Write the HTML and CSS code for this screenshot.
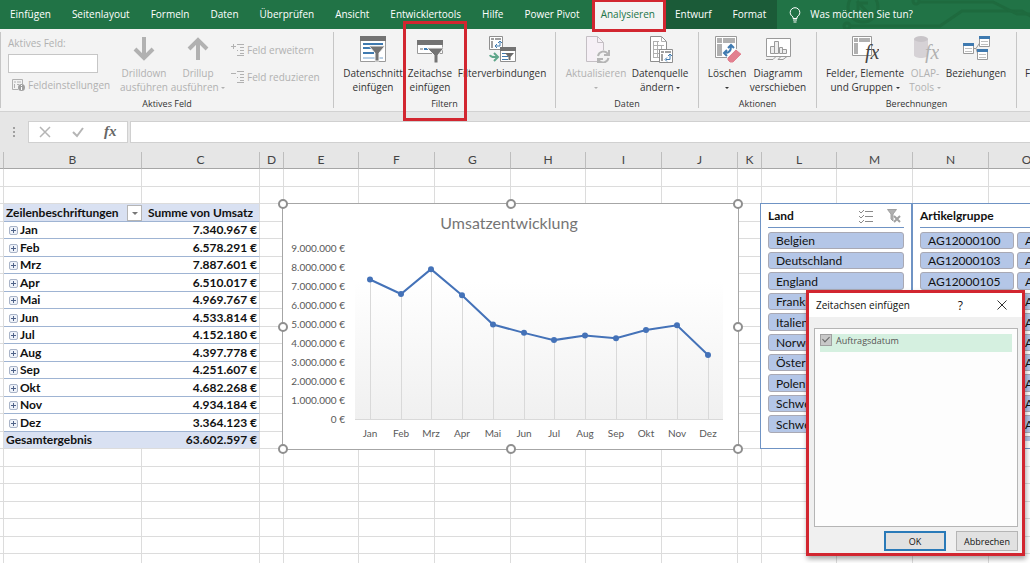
FILE: index.html
```html
<!DOCTYPE html>
<html lang="de">
<head>
    <meta charset="UTF-8">
    <title>Umsatzentwicklung</title>
    <link rel="stylesheet" href="styles.css">
</head>
<body>
    <nav class="tabs">
        <a href="#">Einfügen</a>
        <a href="#">Seitenlayout</a>
        <a href="#">Formeln</a>
        <a href="#">Daten</a>
        <a href="#">Überprüfen</a>
        <a href="#">Ansicht</a>
        <a href="#">Entwicklertools</a>
        <a href="#">Hilfe</a>
        <a href="#">Power Pivot</a>
        <a href="#" class="active">Analysieren<span class="mark mark-tab"></span></a>
        <a href="#" class="context">Entwurf</a>
        <a href="#" class="context">Format</a>
        <a href="#" class="search">
            <svg width="12" height="16" viewBox="0 0 12 16" fill="none" stroke="#fff">
                <path d="M4 11.5V10C2.6 9 1.2 7.600 1.200 5.500a4.700 4.700 0 0 1 9.600 0C10.800 7.600 9.400 9 8 10v1.500zM4 13h4M4.500 15h3"/>
            </svg>
            Was möchten Sie tun?
        </a>
        <svg class="circuit" width="200" height="29" viewBox="0 0 200 29" fill="none" stroke="#1e6a3e" stroke-width="3">
            <circle cx="33" cy="7" r="15"/>
            <path d="M27 1l12 13M28 3h10M28 2v10"/>
            <circle cx="17" cy="26" r="3"/>
            <path d="M20 26h90l22-15h60l10 6"/>
            <circle cx="86" cy="1" r="3"/>
            <path d="M89 2h74l24 12h20"/>
        </svg>
    </nav>

    <div class="ribbon">
        <section class="group">
            <div class="tools tools-field">
                <div class="field">
                    <label for="activeField">Aktives Feld:</label>
                    <input id="activeField" type="text">
                    <button class="small" disabled>
                        <svg width="15" height="14" viewBox="0 0 15 14" fill="none" stroke="#b1b1b1">
                            <path d="M7 11.500H1.500v-10h10V6M3 4h2M6 4h4M3.500 6v4M6 6.500h2"/>
                            <circle cx="10.500" cy="9.500" r="3.500" fill="#a0a0a0" stroke="none"/>
                            <path d="M10.500 7v1M10.500 9v3" stroke="#fff"/>
                        </svg>
                        Feldeinstellungen
                    </button>
                </div>
                <button class="tool" disabled>
                    <svg width="28" height="28" viewBox="0 0 28 28" fill="none" stroke="#b1b1b1" stroke-width="4">
                        <path d="M14 2v21M5 14l9 9 9-9"/>
                    </svg>
                    <span>Drilldown<br>ausführen</span>
                </button>
                <button class="tool" disabled>
                    <svg width="28" height="28" viewBox="0 0 28 28" fill="none" stroke="#b1b1b1" stroke-width="4">
                        <path d="M14 25V5M5 14l9-9 9 9"/>
                    </svg>
                    <span>Drillup<br>ausführen <i class="arrow"></i></span>
                </button>
                <div class="stack">
                    <button class="small" disabled>
                        <svg width="14" height="14" viewBox="0 0 14 14" fill="none" stroke="#b1b1b1">
                            <path d="M0 3.500h5M2.500 1v5M6 1.500h7M9 4.500h4M9 7.500h4M9 10.500h4M6 12.500h7M6 7.500h1"/>
                        </svg>
                        Feld erweitern
                    </button>
                    <button class="small" disabled>
                        <svg width="14" height="14" viewBox="0 0 14 14" fill="none" stroke="#b1b1b1">
                            <path d="M0 3.500h5M6 1.500h7M9 4.500h4M9 7.500h4M9 10.500h4M6 12.500h7M6 7.500h1"/>
                        </svg>
                        Feld reduzieren
                    </button>
                </div>
            </div>
            <h2>Aktives Feld</h2>
        </section>

        <section class="group">
            <div class="tools tools-filter">
                <button class="tool">
                    <svg width="28" height="28" viewBox="0 0 28 28">
                        <path d="M1.500 1.500h25v25h-25z" fill="#fff" stroke="#9a9a9a"/>
                        <path d="M1 1h26v5H1z" fill="#737373"/>
                        <path d="M4 9h20M4 13h12M4 18h11" stroke="#3f7ab0" stroke-width="2"/>
                        <path d="M4 23h20" stroke="#b9cfe4" stroke-width="2"/>
                        <path d="M10 11h16l-6 7v8h-4v-8z" fill="#737373" stroke="#f3f3f3"/>
                    </svg>
                    <span>Datenschnitt<br>einfügen</span>
                </button>
                <button class="tool">
                    <svg width="28" height="28" viewBox="0 0 28 28">
                        <path d="M1.500 5.500h25v13h-25z" fill="#fff" stroke="#9a9a9a"/>
                        <path d="M1 5h26v5H1z" fill="#737373"/>
                        <path d="M4 14h20" stroke="#b5b5b5" stroke-width="2" stroke-dasharray="3 1"/>
                        <path d="M8 14h8" stroke="#3f7ab0" stroke-width="2"/>
                        <path d="M11 13h17l-6 7v8h-4v-8z" fill="#737373" stroke="#f3f3f3"/>
                    </svg>
                    <span>Zeitachse<br>einfügen</span>
                    <span class="mark mark-tool"></span>
                </button>
                <button class="tool">
                    <svg width="28" height="28" viewBox="0 0 28 28" fill="none">
                        <path d="M1.500 1.500h13v13h-13z" fill="#fff" stroke="#8f8f8f"/>
                        <path d="M3 4h3M7 4h6M4 6v7" stroke="#a0a0a0" stroke-width="2"/>
                        <path d="M8 11h4V6M10 8l2-2 2 2M9 9l-2 2 2 2" stroke="#3f7ab0"/>
                        <path d="M12.500 12.500h15v14h-15z" fill="#fff" stroke="#8f8f8f"/>
                        <path d="M12 12h16v4H12z" fill="#737373"/>
                        <path d="M14 18.500h8M14 21.500h6M14 24.500h6" stroke="#3f7ab0"/>
                        <path d="M17 18h9l-3.500 4v3h-2v-3z" fill="#6a6a6a"/>
                        <path d="M2 20c1 3 4 2 7 2M6 18l4 4-4 4" stroke="#5fa68a" stroke-width="2"/>
                    </svg>
                    <span>Filterverbindungen</span>
                </button>
            </div>
            <h2>Filtern</h2>
        </section>

        <section class="group">
            <div class="tools tools-data">
                <button class="tool" disabled>
                    <svg width="28" height="28" viewBox="0 0 28 28" fill="none">
                        <path d="M4.500 1.500h11l6 6v19h-17z" fill="#f6f0f6" stroke="#c4bfc4"/>
                        <path d="M15.500 1.500v6h6" stroke="#c4bfc4"/>
                        <circle cx="21" cy="22" r="7" fill="#f3f3f3"/>
                        <path d="M16 21a5.500 5.500 0 0 1 10-2M26.500 23a5.500 5.500 0 0 1-10 2M27 15v5h-5M16 28v-4h5" stroke="#b5b5b5" stroke-width="2"/>
                    </svg>
                    <span>Aktualisieren<br><i class="arrow"></i></span>
                </button>
                <button class="tool">
                    <svg width="28" height="28" viewBox="0 0 28 28" fill="none" stroke="#8f8f8f">
                        <path d="M4.500 1.500h11l5 5v20h-16z" fill="#fff"/>
                        <path d="M15.500 1.500v5h5M7 6.500h6M7 10.500h11M7 14.500h11M7 18.500h8M7 22.500h8M7.500 6v17M11.500 6v17M15.500 10v6" stroke="#b0b0b0"/>
                        <path d="M13.500 14.500h13v13h-13z" fill="#fff"/>
                        <path d="M15 17h3M19 17h6M16 19v7" stroke="#a0a0a0" stroke-width="2"/>
                        <path d="M20 24.500h4V19M22 21l2-2 2 2M21 22.500l-2 2 2 2" stroke="#3f7ab0"/>
                    </svg>
                    <span>Datenquelle<br>ändern <i class="arrow"></i></span>
                </button>
            </div>
            <h2>Daten</h2>
        </section>

        <section class="group">
            <div class="tools tools-action">
                <button class="tool">
                    <svg width="28" height="28" viewBox="0 0 28 28" fill="none">
                        <path d="M2.500 1.500h21v21h-21z" fill="#fff" stroke="#9a9a9a"/>
                        <path d="M4 3h5v5H4zM10 3h12v5H10zM4 9h5v12H4z" fill="#b0b0b0"/>
                        <path d="M12 18c5 0 6-3 6-7M15 13l3-3 3 3M14 15l-3 3 3 3" stroke="#3f7ab0" stroke-width="2"/>
                        <path d="M14 23l9-9 6 5-9 9h-3l-3-3z" fill="#e2808f" stroke="#f3f3f3"/>
                    </svg>
                    <span>Löschen<br><i class="arrow"></i></span>
                </button>
                <button class="tool">
                    <svg width="28" height="28" viewBox="0 0 28 28" fill="#fff" stroke="#9a9a9a">
                        <path d="M2.500 3.500h24v18h-24z"/>
                        <path d="M6.500 11.500h4v7h-4zM10.500 6.500h4v12h-4zM15.500 12.500h3v6h-3zM18.500 14.500h4v4h-4z" fill="#eee"/>
                        <path d="M2 24.500h7l3-3h5l-3 3h5l4-3" fill="none"/>
                    </svg>
                    <span>Diagramm<br>verschieben</span>
                </button>
            </div>
            <h2>Aktionen</h2>
        </section>

        <section class="group">
            <div class="tools tools-calc">
                <button class="tool">
                    <svg width="28" height="28" viewBox="0 0 28 28">
                        <path d="M1.500 1.500h19v19h-19z" fill="#fff" stroke="#9a9a9a"/>
                        <path d="M3 3h4v4H3zM8 3h11v4H8zM3 8h4v11H3z" fill="#b0b0b0"/>
                        <text class="fx fx-big" x="14" y="24">fx</text>
                    </svg>
                    <span>Felder, Elemente<br>und Gruppen <i class="arrow"></i></span>
                </button>
                <button class="tool" disabled>
                    <svg width="28" height="28" viewBox="0 0 28 28">
                        <path d="M3 4v16c0 4 14 4 14 0V4z" fill="#d6d2d6"/>
                        <ellipse cx="10" cy="4" rx="7" ry="3" fill="#c8c4c8"/>
                        <text class="fx fx-big fx-off" x="14" y="24">fx</text>
                    </svg>
                    <span>OLAP-<br>Tools <i class="arrow"></i></span>
                </button>
                <button class="tool">
                    <svg width="28" height="28" viewBox="0 0 28 28" fill="#fff" stroke="#9a9a9a">
                        <path d="M11 13.500h3l4-6M14 13.500l2 6" fill="none"/>
                        <path d="M1.500 8.500h10v10h-10zM17.500 1.500h10v10h-10zM15.500 14.500h10v10h-10z"/>
                        <path d="M1 9.500h11M17 2.500h11M15 15.500h11" stroke="#3f7ab0" stroke-width="3"/>
                        <path d="M3 13.500h7M3 16.500h7M19 6.500h7M19 9.500h7M17 19.500h7M17 22.500h7" stroke="#c0c0c0"/>
                    </svg>
                    <span>Beziehungen</span>
                </button>
            </div>
            <h2>Berechnungen</h2>
        </section>

        <section class="group group-cut">
            <div class="tools">
                <button class="tool"><span>Feldliste</span></button>
            </div>
        </section>
    </div>

    <div class="formula">
        <svg class="grip" width="4" height="12" viewBox="0 0 4 12" fill="#a0a0a0">
            <path d="M1 1h2v2H1zM1 5h2v2H1zM1 9h2v2H1z"/>
        </svg>
        <div class="formula-buttons">
            <button aria-label="Abbrechen">
                <svg width="12" height="12" viewBox="0 0 12 12" stroke="#b5b5b5" stroke-width="1.500"><path d="M1 1l10 10M11 1L1 11"/></svg>
            </button>
            <button aria-label="Eingeben">
                <svg width="12" height="12" viewBox="0 0 12 12" fill="none" stroke="#b5b5b5" stroke-width="2"><path d="M1 6l4 4 6-8"/></svg>
            </button>
            <button aria-label="Funktion einfügen">
                <svg width="16" height="18" viewBox="0 0 16 18"><text class="fx" x="1" y="13">fx</text></svg>
            </button>
        </div>
        <input type="text" aria-label="Bearbeitungsleiste">
    </div>

    <main class="sheet">
        <table class="cells">
            <colgroup>
                <col class="w-a"><col class="w-b"><col class="w-c"><col class="w-gap">
                <col class="w-odd"><col class="w-std"><col class="w-std"><col class="w-odd"><col class="w-std"><col class="w-std">
                <col class="w-gap"><col class="w-odd"><col class="w-std"><col class="w-std"><col class="w-std"><col>
            </colgroup>
            <thead>
                <tr>
                    <th></th><th>B</th><th>C</th><th>D</th><th>E</th><th>F</th><th>G</th><th>H</th>
                    <th>I</th><th>J</th><th>K</th><th>L</th><th>M</th><th>N</th><th>O</th><th></th>
                </tr>
            </thead>
            <tbody id="cellRows"></tbody>
        </table>

        <figure class="chart">
            <svg id="chart" width="454" height="244" viewBox="0 0 454 244"></svg>
            <i class="handle h-left v-top"></i><i class="handle h-mid v-top"></i><i class="handle h-right v-top"></i>
            <i class="handle h-left v-mid"></i><i class="handle h-right v-mid"></i>
            <i class="handle h-left v-bottom"></i><i class="handle h-mid v-bottom"></i><i class="handle h-right v-bottom"></i>
        </figure>

        <section class="slicer slicer-land">
            <header>
                <h3>Land</h3>
                <button aria-label="Mehrfachauswahl">
                    <svg width="14" height="14" viewBox="0 0 14 14" fill="none" stroke="#8a8a8a">
                        <path d="M0 2l2 2 3-3M0 7l2 2 3-3M0 12l2 2 3-3M6 2.500h8M6 7.500h8M6 12.500h8"/>
                    </svg>
                </button>
                <button aria-label="Filter löschen">
                    <svg width="14" height="14" viewBox="0 0 14 14" fill="#b0b0b0" stroke="#a0a0a0">
                        <path d="M0.500 0.500h9L6 5v7L4 10V5z"/><path d="M7 7l6 6M13 7l-6 6" stroke-width="2"/>
                    </svg>
                </button>
            </header>
            <div class="slicer-list">
                <div class="slicer-col" id="landList"></div>
            </div>
        </section>

        <section class="slicer slicer-group">
            <header><h3>Artikelgruppe</h3></header>
            <div class="slicer-list">
                <div class="slicer-col" id="groupList1"></div>
                <div class="slicer-col" id="groupList2"></div>
            </div>
        </section>

        <div class="dialog" role="dialog" aria-labelledby="dialogTitle">
            <header>
                <h3 id="dialogTitle">Zeitachsen einfügen</h3>
                <button aria-label="Hilfe">?</button>
                <button aria-label="Schließen">
                    <svg width="10" height="10" viewBox="0 0 10 10" stroke="#333"><path d="M0.500 0.500l9 9M9.500 0.500l-9 9"/></svg>
                </button>
            </header>
            <div class="dialog-list">
                <label><input type="checkbox" checked disabled>Auftragsdatum</label>
            </div>
            <footer>
                <button class="primary">OK</button>
                <button>Abbrechen</button>
            </footer>
        </div>
    </main>

    <script>
        const months = [
            ['Jan', 7340967], ['Feb', 6578291], ['Mrz', 7887601], ['Apr', 6510017],
            ['Mai', 4969767], ['Jun', 4533814], ['Jul', 4152180], ['Aug', 4397778],
            ['Sep', 4251607], ['Okt', 4682268], ['Nov', 4934184], ['Dez', 3364123]
        ];
        const grandTotal = 63602597;

        function euro(value) {
            return String(value).replace(/\B(?=(\d{3})+$)/g, '.') + ' €';
        }

        // Tabellenzeilen
        function row(cls, b, c) {
            return `<tr class="${cls}"><td></td><td>${b}</td><td>${c}</td>${'<td></td>'.repeat(13)}</tr>`;
        }

        function loadCells() {
            let html = row('', '', '').repeat(2);
            html += row('pivot-head', '<div>Zeilenbeschriftungen<button aria-label="Filter"><i class="arrow"></i></button></div>', 'Summe von Umsatz');
            months.forEach(([name, value]) => {
                html += row('pivot-row', `<button class="expand" aria-label="Erweitern"></button>${name}`, euro(value));
            });
            html += row('pivot-total', 'Gesamtergebnis', euro(grandTotal));
            html += row('', '', '').repeat(7);
            document.getElementById('cellRows').innerHTML = html;
        }

        // Liniendiagramm
        function loadChart() {
            const left = 72, bottom = 215, perMillion = 19;
            const x = i => Math.round(87 + i * 30.7);
            const y = v => bottom - v / 1000000 * perMillion;
            let html = `
                <defs><linearGradient id="plot" x1="0" y1="0" x2="0" y2="1">
                    <stop offset="0.2" stop-color="#ffffff"/><stop offset="1" stop-color="#f0f0f0"/>
                </linearGradient></defs>
                <rect x="${left}" y="43" width="368" height="172" fill="url(#plot)"/>
                <text class="chart-title" x="226" y="25">Umsatzentwicklung</text>
                <path d="M${left} ${bottom}.5h368" stroke="#d9d9d9"/>`;
            for (let i = 0; i < 10; i++) {
                html += `<text class="chart-y" x="62" y="${bottom + 4 - i * perMillion}">${euro(i * 1000000)}</text>`;
            }
            months.forEach(([name, value], i) => {
                html += `<path d="M${x(i)}.5 ${bottom}V${y(value)}" stroke="#d9d9d9"/>
                         <text class="chart-x" x="${x(i)}" y="233">${name}</text>`;
            });
            html += `<polyline class="chart-line" points="${months.map((m, i) => x(i) + ',' + y(m[1])).join(' ')}"/>`;
            months.forEach((m, i) => {
                html += `<circle class="chart-dot" cx="${x(i)}" cy="${y(m[1])}" r="3"/>`;
            });
            document.getElementById('chart').innerHTML = html;
        }

        function loadSlicer(id, items) {
            document.getElementById(id).innerHTML = items.map(item => `<button>${item}</button>`).join('');
        }

        loadCells();
        loadChart();
        loadSlicer('landList', ['Belgien', 'Deutschland', 'England', 'Frankreich', 'Italien',
            'Norwegen', 'Österreich', 'Polen', 'Schweden', 'Schweiz']);
        loadSlicer('groupList1', ['100', '103', '105', '107', '109', '111', '113', '115', '117', '119', '121'].map(n => 'AG12000' + n));
        loadSlicer('groupList2', ['102', '104', '106', '108', '110', '112', '114', '116', '118', '120', '122'].map(n => 'AG12000' + n));
    </script>
</body>
</html>
```
FILE: styles.css
```css
* {
    box-sizing: border-box;
}
body {
    margin: 0;
    height: 100vh;
    display: flex;
    flex-direction: column;
    overflow: hidden;
    font-family: "Open Sans", "Noto Sans", sans-serif;
    font-size: 10px;
    color: #333;
    background: #fff;
}
button {
    font: inherit;
    color: inherit;
    border: 0;
    padding: 0;
    background: none;
}
h2, h3, figure {
    margin: 0;
}
svg {
    display: block;
    flex: none;
}

/* Registerkarten */
.tabs {
    position: relative;
    display: flex;
    flex: none;
    height: 29px;
    background: #217346;
    color: #fff;
    line-height: 29px;
    white-space: nowrap;
}
.tabs a {
    position: relative;
    z-index: 1;
    padding: 0 11px 0 10px;
    color: inherit;
    text-decoration: none;
}
.tabs a.active {
    z-index: 2;
    margin-left: 2px;
    padding: 0 10px 0 8px;
    background: #f3f3f3;
    color: #217346;
}
.tabs a.context {
    background: #1b5b38;
}
.tabs a.search {
    display: flex;
    align-items: center;
    gap: 9px;
    padding: 0 12px;
}
.circuit {
    position: absolute;
    right: 0;
    top: 0;
}
.mark {
    position: absolute;
    z-index: 2;
    border: 3px solid #d22630;
    pointer-events: none;
}
.mark-tab {
    inset: -1px -1px -3px -1px;
}
.mark-tool {
    inset: -11px -9px -27px 1px;
}

/* Menüband */
.ribbon {
    display: flex;
    flex: none;
    height: 83px;
    padding: 3px 0;
    background: #f3f3f3;
    border-bottom: 1px solid #d2d2d2;
    white-space: nowrap;
}
.group {
    display: flex;
    flex-direction: column;
    flex: none;
    border-left: 1px solid #c6c6c6;
}
.group h2 {
    margin-top: auto;
    font-size: 9px;
    font-weight: 400;
    line-height: 8px;
    text-align: center;
}
.tools {
    display: grid;
    align-items: start;
}
.tools-field {
    grid-template-columns: 109px 54px 54px 102px;
    padding: 0 6px 0 7px;
}
.tools-filter {
    grid-template-columns: 58px 56px 88px;
    padding: 0 9px 0 10px;
}
.tools-data {
    grid-template-columns: 66px 62px;
    padding: 0 7px;
}
.tools-action {
    grid-template-columns: 44px 58px;
    padding: 0 9px 0 6px;
}
.tools-calc {
    grid-template-columns: 84px 36px 66px;
    padding: 0 7px 0 6px;
}
.group-cut {
    padding-left: 8px;
}
.tool {
    position: relative;
    display: flex;
    flex-direction: column;
    align-items: center;
    padding-top: 3px;
    line-height: 14px;
}
.tool > span:not(.mark) {
    padding-top: 3px;
}
.group-cut .tool {
    padding-top: 31px;
}
.tool:disabled, .small:disabled, .field label {
    color: #b1b1b1;
}
.arrow {
    display: inline-block;
    border: 2px solid transparent;
    border-top-color: currentColor;
    border-bottom: 0;
    vertical-align: 2px;
}
.field, .stack {
    display: flex;
    flex-direction: column;
    align-items: flex-start;
}
.field label {
    line-height: 22px;
}
.field input {
    width: 90px;
    height: 19px;
    border: 1px solid #c6c6c6;
    background: #fff;
}
.small {
    display: flex;
    align-items: center;
    gap: 2px;
    height: 23px;
}
.field .small {
    padding-left: 3px;
}
.stack {
    gap: 4px;
    padding: 6px 0 0 6px;
}

/* Bearbeitungsleiste */
.formula {
    display: flex;
    align-items: center;
    flex: none;
    height: 40px;
    background: #e6e6e6;
}
.grip {
    margin: 0 12px;
}
.formula-buttons {
    display: flex;
    width: 100px;
    height: 22px;
    margin-right: 2px;
    border: 1px solid #d0d0d0;
    background: #fff;
}
.formula-buttons button {
    display: flex;
    flex: 1;
    align-items: center;
    justify-content: center;
}
.formula input {
    flex: 1;
    height: 22px;
    border: 1px solid #d0d0d0;
    border-right: 0;
    background: #fff;
}
.fx {
    font: italic bold 15px "Liberation Serif", serif;
    fill: #666;
}
.fx-big {
    font-size: 20px;
    font-weight: 400;
    fill: #444;
}
.fx-off {
    fill: #b1b1b1;
}

/* Tabelle */
.sheet {
    position: relative;
    flex: 1;
    overflow: hidden;
    font-family: Lato, sans-serif;
    font-size: 12px;
    color: #111;
}
.cells {
    width: 100%;
    min-width: 1068px;
    table-layout: fixed;
    border-collapse: separate;
    border-spacing: 0;
}
.w-a { width: 4px; }
.w-b { width: 138px; }
.w-c { width: 118px; }
.w-gap { width: 24px; }
.w-odd { width: 75px; }
.w-std { width: 76px; }
.cells th {
    height: 17px;
    padding: 0;
    background: #e6e6e6;
    border-right: 1px solid #bdbdbd;
    border-bottom: 1px solid #a6a6a6;
    font-weight: 400;
    line-height: 16px;
    color: #444;
}
.cells td {
    height: 18px;
    padding: 0 2px;
    border-right: 1px solid #dcdcdc;
    border-bottom: 1px solid #dcdcdc;
    line-height: 16px;
    white-space: nowrap;
}
.cells tr:nth-child(even) td {
    height: 17px;
}
.cells [class^="pivot"] td {
    font-weight: 700;
}
.cells [class^="pivot"] td:nth-child(2) {
    border-right: 0;
}
.cells [class^="pivot"] td:nth-child(3) {
    text-align: right;
}
.cells .pivot-head td:nth-child(3) {
    text-align: center;
}
.pivot-head td:nth-child(2), .pivot-head td:nth-child(3),
.pivot-total td:nth-child(2), .pivot-total td:nth-child(3) {
    background: #d9e1f2;
}
.pivot-head div {
    display: flex;
    justify-content: space-between;
}
.cells .pivot-head td:nth-child(2) {
    padding-right: 0;
}
.pivot-head button {
    width: 15px;
    height: 16px;
    border: 1px solid #b5b5b5;
    background: #fff;
    line-height: 10px;
    color: #777;
}
.pivot-head .arrow {
    border-width: 3px 3px 0;
}
.pivot-head td:nth-child(2), .pivot-head td:nth-child(3),
.pivot-row td:nth-child(2), .pivot-row td:nth-child(3) {
    border-bottom-color: #9fb4d3;
}
.expand {
    width: 9px;
    height: 9px;
    margin: 0 2px 0 3px;
    border: 1px solid #a9b4c8;
    border-radius: 2px;
    background:
        linear-gradient(#4f6288, #4f6288) center / 5px 1px no-repeat,
        linear-gradient(#4f6288, #4f6288) center / 1px 5px no-repeat,
        #eef2f9;
}

/* Diagramm */
.chart {
    position: absolute;
    left: 282px;
    top: 51px;
    width: 457px;
    height: 247px;
    border: 1px solid #a6a6a6;
    background: #fff;
}
.chart text {
    font-size: 10px;
    fill: #595959;
}
.chart .chart-title {
    font-size: 16px;
    fill: #757575;
}
.chart-title, .chart-x {
    text-anchor: middle;
}
.chart-y {
    text-anchor: end;
}
.chart-line {
    fill: none;
    stroke: #4472b8;
    stroke-width: 2;
}
.chart-dot {
    fill: #4472b8;
}
.handle {
    position: absolute;
    width: 10px;
    height: 10px;
    border: 2px solid #8f8f8f;
    border-radius: 50%;
    background: #fff;
    transform: translate(-50%, -50%);
}
.h-left { left: 0; }
.h-mid { left: 50%; }
.h-right { left: 100%; }
.v-top { top: 0; }
.v-mid { top: 50%; }
.v-bottom { top: 100%; }

/* Datenschnitte */
.slicer {
    position: absolute;
    top: 51px;
    width: 152px;
    height: 246px;
    padding: 0 7px;
    border: 1px solid #6f93c4;
    background: #fff;
}
.slicer-land { left: 760px; }
.slicer-group {
    left: 912px;
    width: 207px;
}
.slicer header {
    display: flex;
    align-items: center;
    gap: 14px;
    height: 24px;
    padding-right: 3px;
    border-bottom: 1px solid #6f93c4;
}
.slicer h3 {
    flex: 1;
    font-size: 12px;
}
.slicer-list {
    display: flex;
    gap: 3px;
    height: 213px;
    padding-top: 4px;
    overflow: hidden;
}
.slicer-col {
    display: flex;
    flex: 1;
    flex-direction: column;
    gap: 3px;
}
.slicer-col button {
    flex: none;
    height: 17px;
    padding-left: 7px;
    border: 1px solid #a9a9b4;
    border-radius: 3px;
    background: #b4c6e7;
    line-height: 15px;
    text-align: left;
}
.slicer-col button:nth-child(5n+3), .slicer-col button:nth-child(5n) {
    height: 18px;
}

/* Dialog */
.dialog {
    position: absolute;
    left: 806px;
    top: 138px;
    width: 219px;
    height: 266px;
    display: flex;
    flex-direction: column;
    border: 3px solid #d22630;
    background: #f0f0f0;
    box-shadow: 1px 3px 5px rgba(0, 0, 0, 0.35);
    font-family: "Open Sans", "Noto Sans", sans-serif;
    font-size: 9px;
}
.dialog header {
    display: flex;
    align-items: center;
    gap: 34px;
    height: 24px;
    padding: 0 15px 0 7px;
    background: #fff;
}
.dialog h3 {
    flex: 1;
    font-size: 10px;
    font-weight: 400;
}
.dialog header button {
    font-size: 12px;
}
.dialog-list {
    flex: 1;
    margin: 11px 4px 0 5px;
    padding: 5px;
    border: 1px solid #b5b5b5;
    background: #fdfdfd;
}
.dialog-list label {
    display: flex;
    gap: 4px;
    height: 18px;
    background: #d5f0e0;
    line-height: 14px;
    color: #555;
}
.dialog-list input {
    appearance: none;
    width: 12px;
    height: 12px;
    margin: 0;
    border: 1px solid #a0a0a0;
    background: #c8c8c8;
}
.dialog-list input::after {
    content: "";
    display: block;
    width: 3px;
    height: 6px;
    margin: 0 0 0 3px;
    border: solid #666;
    border-width: 0 1px 1px 0;
    transform: rotate(45deg);
}
.dialog footer {
    display: flex;
    justify-content: flex-end;
    gap: 10px;
    padding: 4px 4px 2px;
}
.dialog footer button {
    width: 62px;
    height: 20px;
    border: 1px solid #b5b5b5;
    background: #e1e1e1;
}
.dialog footer .primary {
    border: 2px solid #2a7ab8;
}
```
